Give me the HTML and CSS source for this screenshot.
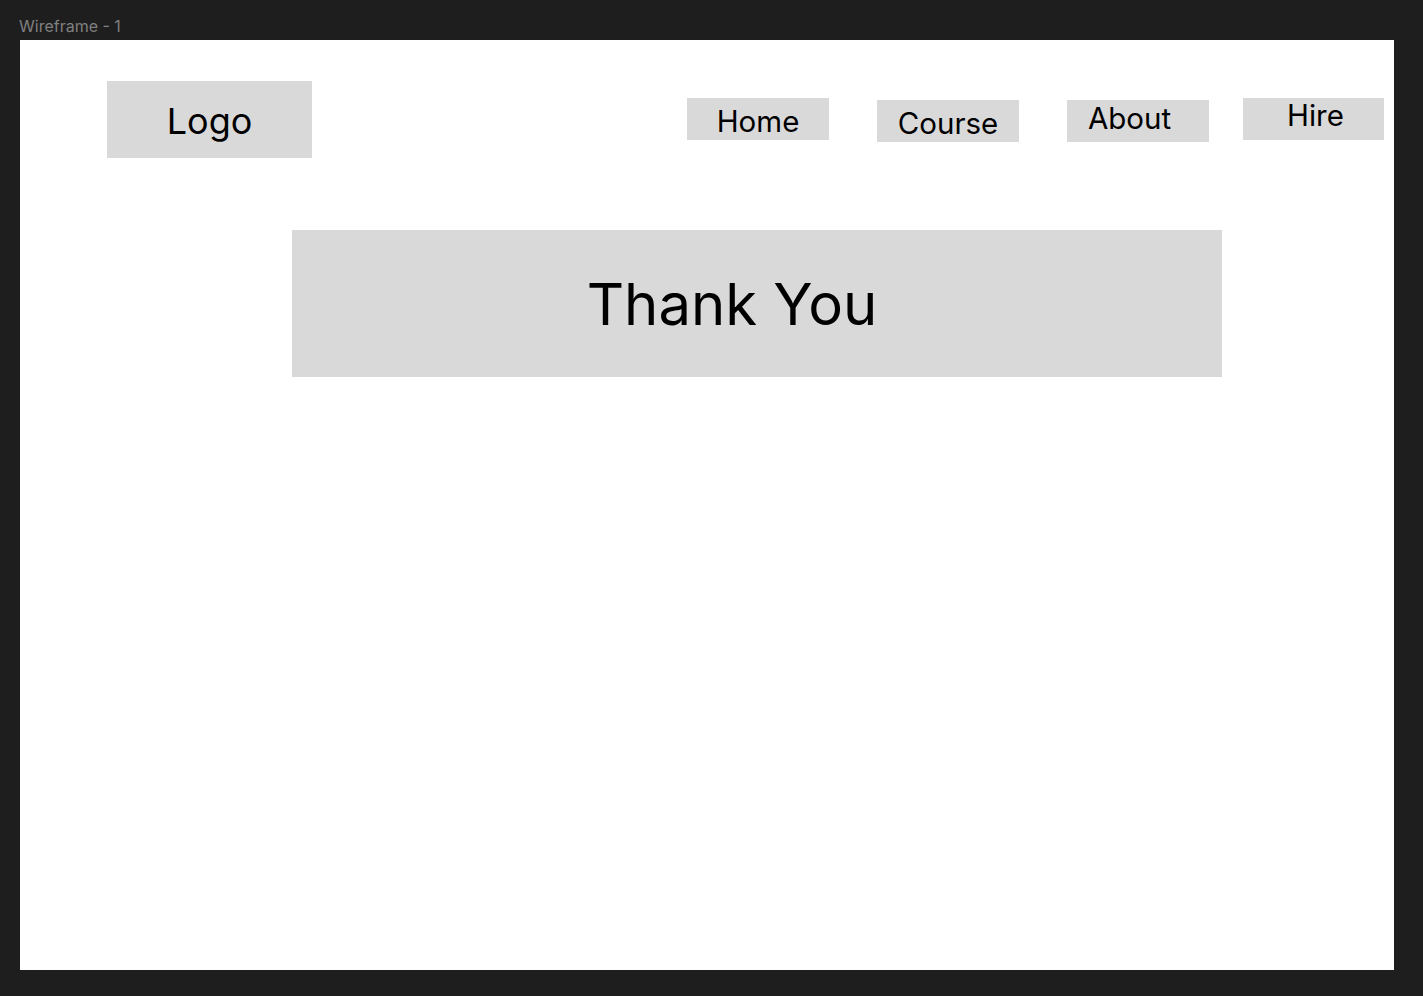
FILE: index.html
```html
<!DOCTYPE html>
<html lang="en">
<head>
<meta charset="utf-8">
<title>Wireframe - 1</title>
<link rel="stylesheet" href="styles.css">
</head>
<body>
  <div class="canvas">
    <div class="frame-label">Wireframe - 1</div>
    <main class="frame">
      <header class="header">
        <div class="logo">Logo</div>
        <nav class="nav">
          <div class="nav-item nav-home">Home</div>
          <div class="nav-item nav-course">Course</div>
          <div class="nav-item nav-about">About</div>
          <div class="nav-item nav-hire">Hire</div>
        </nav>
      </header>
      <section class="thanks">Thank You</section>
    </main>
  </div>
</body>
</html>
```

FILE: styles.css
```css
html, body {
  margin: 0;
  padding: 0;
  background: #1e1e1e;
  width: 1423px;
  height: 996px;
  overflow: hidden;
}

.canvas {
  padding: 0 29px 0 20px;
  font-family: Inter, "Noto Sans", sans-serif;
}

.frame-label {
  height: 40px;
  box-sizing: border-box;
  padding-top: 16px;
  margin-left: -1px;
  font-size: 16px;
  line-height: 20px;
  color: #808080;
}

.frame {
  display: flex;
  flex-direction: column;
  width: 1374px;
  height: 930px;
  background: #ffffff;
  color: #000;
}

.header {
  display: flex;
  align-items: flex-start;
  padding: 41px 10px 0 87px;
}

.logo {
  width: 205px;
  height: 77px;
  background: #d9d9d9;
  display: flex;
  align-items: center;
  justify-content: center;
  font-size: 36px;
  padding-top: 2px;
  box-sizing: border-box;
}

.nav {
  display: flex;
  align-items: flex-start;
  margin-left: auto;
}

.nav-item {
  width: 142px;
  height: 42px;
  background: #d9d9d9;
  display: flex;
  align-items: center;
  justify-content: center;
  font-size: 29.5px;
  box-sizing: border-box;
}

.nav-home { margin-top: 17px; width: 142px; padding-top: 4px; }
.nav-course { margin-top: 19px; margin-left: 48px; padding-top: 3px; }
.nav-about { margin-top: 19px; margin-left: 48px; padding-right: 17px; padding-bottom: 6px; }
.nav-hire { margin-top: 17px; margin-left: 34px; width: 141px; padding-bottom: 8px; padding-left: 4px; }

.thanks {
  margin: 72px 0 0 272px;
  width: 930px;
  height: 147px;
  background: #d9d9d9;
  display: flex;
  align-items: center;
  justify-content: center;
  padding-right: 50px;
  box-sizing: border-box;
  font-size: 58px;
}
```
